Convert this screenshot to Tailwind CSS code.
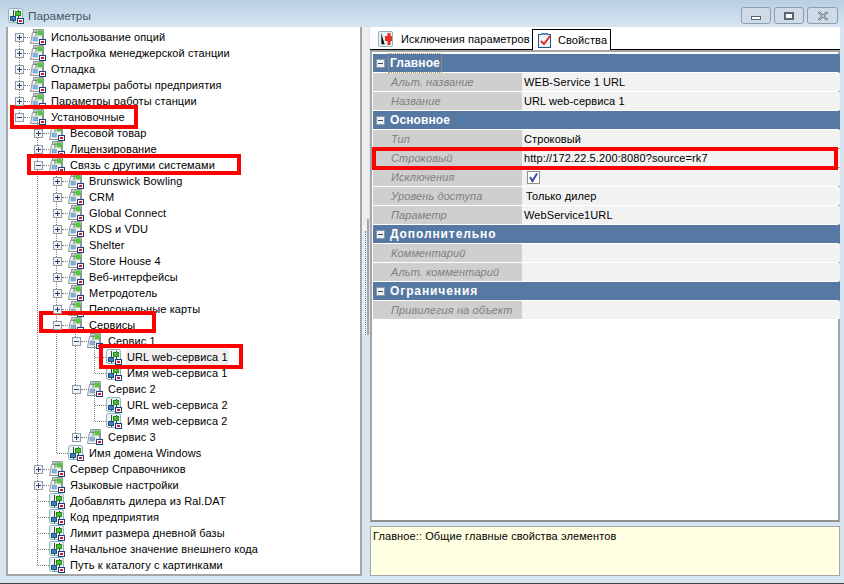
<!DOCTYPE html>
<html lang="ru">
<head>
    <meta charset="UTF-8">
    <title>Параметры</title>
    <script src="https://cdn.jsdelivr.net/npm/@tailwindcss/browser@4"></script>
</head>
<body class="w-[844px] h-[584px] overflow-hidden bg-[#d7e5f2] font-['Liberation_Sans',sans-serif] text-[11px] tracking-[0.1px] text-black">
    <svg class="hidden">
        <symbol id="leaf" viewBox="0 0 16 16">
            <rect x="0.500" y="0.500" width="14" height="14" rx="2" fill="#e6f2f3" stroke="#8fb3bb"/>
            <path d="M5.500 2v7M10.500 8v3M5.500 13v1M10.500 2v1" stroke="#444"/>
            <rect x="2.500" y="8.500" width="5" height="4" fill="#3c7fc4" stroke="#24507f"/>
            <rect x="7.500" y="3.500" width="5" height="4" fill="#46c22c" stroke="#2a8a1a"/>
            <rect x="9.500" y="10.500" width="6" height="5" fill="#fff" stroke="#1d3f78"/>
            <rect x="11" y="12" width="3" height="2" fill="#e8102a"/>
        </symbol>
        <symbol id="folder" viewBox="0 0 16 16">
            <path d="M3.500 0.500h10v12h-10z" fill="#c7cdcd" stroke="#8f9898"/>
            <path d="M2.500 3.500h10v11H0.500z" fill="#eef2f2" stroke="#8f9898"/>
            <rect x="7.500" y="1.500" width="5" height="5" fill="#56c63c"/>
            <rect x="3" y="8" width="4.500" height="4" fill="#85b3dc" stroke="#6f96b8" stroke-width="0.500"/>
            <path d="M6 2v5" stroke="#6f7878"/>
            <rect x="9.500" y="10.500" width="6" height="5" fill="#fff" stroke="#1d3f78"/>
            <rect x="11" y="12" width="3" height="2" fill="#e8102a"/>
        </symbol>
    </svg>

    <!-- title bar -->
    <div class="h-[27px] flex items-center bg-gradient-to-b from-[#b9cfe2] to-[#d5e4f1]">
        <svg class="w-4 h-4 ml-[8px] mt-[5px]"><use href="#leaf"/></svg>
        <span class="ml-[4px] mt-[7px] text-[11.800px] tracking-normal text-[#46545f]">Параметры</span>
        <div class="ml-auto mr-[6px] mt-[4px] flex gap-[3px]">
            <div class="w-[30px] h-[17px] rounded-[3px] border border-[#8c9db0] bg-[#cfdce8] flex items-center justify-center">
                <div class="w-[10px] h-[4px] mt-[5px] border border-[#5b6570] bg-white"></div>
            </div>
            <div class="w-[30px] h-[17px] rounded-[3px] border border-[#8c9db0] bg-[#cfdce8] flex items-center justify-center">
                <div class="w-[10px] h-[8px] border-2 border-[#5b6570] bg-white"></div>
            </div>
            <div class="w-[31px] h-[17px] rounded-[3px] border border-[#8c9db0] bg-[#cfdce8] flex items-center justify-center">
                <svg class="w-[12px] h-[10px]" viewBox="0 0 12 10"><path d="M1.500 1l9 8M10.500 1l-9 8" stroke="#59636e" stroke-width="2.200"/><path d="M1.500 1l9 8M10.500 1l-9 8" stroke="#f4f6f8" stroke-width="0.800"/></svg>
            </div>
        </div>
    </div>

    <div class="flex h-[549px] pl-[6px] pr-[4px]">
        <!-- tree -->
        <div id="tree" class="relative w-[357px] border-2 border-t-0 border-[#a6a6a6] bg-white pt-[2px]"></div>

        <!-- splitter -->
        <div class="w-[7px] flex flex-col">
            <div class="h-[192px] bg-[#eeeeee]"></div>
            <div class="relative h-[116px] border-r-2 border-[#a6a6a6] bg-[#eeeeee]">
                <span class="absolute left-0 top-[1px] text-[11px] leading-[14px] font-bold text-white">‹</span>
                <div class="absolute left-[3px] top-[12px] bottom-0 border-l border-dotted border-[#3f8ee8]"></div>
            </div>
        </div>

        <!-- right side -->
        <div class="w-[470px] ml-[1px] flex flex-col">
            <div class="h-[23px] flex items-end bg-white border-b border-black">
                <div class="h-[20px] flex items-center pl-[8px] w-[162px]">
                    <svg class="w-[16px] h-[16px] shrink-0" viewBox="0 0 16 16">
                        <rect x="0.500" y="0.500" width="14" height="15" rx="1" fill="#e6f2f3" stroke="#8fb3bb"/>
                        <path d="M3.500 3v10h3M11 2v12" stroke="#555"/>
                        <rect x="7" y="5" width="7" height="5" fill="#e5301f"/>
                        <rect x="9.500" y="2" width="3" height="12" fill="#e5301f"/>
                    </svg>
                    <span class="ml-[7px] whitespace-nowrap">Исключения параметров</span>
                </div>
                <div class="relative h-[21px] w-[79px] -mb-px flex items-center pl-[5px] bg-white border border-b-0 border-black">
                    <svg class="w-[14px] h-[15px] shrink-0" viewBox="0 0 14 15">
                        <rect x="0.500" y="1.500" width="12" height="13" fill="#eef3fa" stroke="#24507f"/>
                        <path d="M3 1h7" stroke="#5f88b5" stroke-width="2"/>
                        <path d="M3 8l3 3 6-8" fill="none" stroke="#e0301f" stroke-width="2"/>
                    </svg>
                    <span class="ml-[6px]">Свойства</span>
                </div>
            </div>

            <div class="h-[472px] border-2 border-[#a6a6a6] border-b-[#8f8f8f] bg-white pt-[2px] pl-[1px]">
                <div class="flex flex-col gap-px w-[467px]">
                    <div class="h-[18px] flex items-center bg-[#5679a3] text-white font-bold text-[12px] pl-[3px]">
                        <span class="w-[9px] h-[9px] flex items-center justify-center border border-[#8b99a8] bg-[#eef0f2]"><span class="w-[5px] h-px bg-[#3a4a5c]"></span></span>
                        <span class="ml-[4px] px-[1px] outline-1 outline-dotted outline-[#b79a5e]">Главное</span>
                    </div>
                    <div class="h-[18px] flex items-center"><div class="w-[149px] h-full flex items-center pl-[18px] bg-[#cfcfcf] italic text-[#808080]">Альт. название</div><div class="flex-1 h-full flex items-center pl-[2px] bg-[#f2f2f2]">WEB-Service 1 URL</div></div>
                    <div class="h-[18px] flex items-center"><div class="w-[149px] h-full flex items-center pl-[18px] bg-[#cfcfcf] italic text-[#808080]">Название</div><div class="flex-1 h-full flex items-center pl-[2px] bg-[#f2f2f2]">URL web-сервиса 1</div></div>

                    <div class="h-[18px] flex items-center bg-[#5679a3] text-white font-bold text-[12px] pl-[3px]">
                        <span class="w-[9px] h-[9px] flex items-center justify-center border border-[#8b99a8] bg-[#eef0f2]"><span class="w-[5px] h-px bg-[#3a4a5c]"></span></span>
                        <span class="ml-[5px]">Основное</span>
                    </div>
                    <div class="h-[18px] flex items-center"><div class="w-[149px] h-full flex items-center pl-[18px] bg-[#cfcfcf] italic text-[#808080]">Тип</div><div class="flex-1 h-full flex items-center pl-[2px] bg-[#f2f2f2]">Строковый</div></div>
                    <div class="h-[18px] flex items-center"><div class="w-[149px] h-full flex items-center pl-[18px] bg-[#cfcfcf] italic text-[#808080]">Строковый</div><div class="flex-1 h-full flex items-center pl-[2px] bg-[#f2f2f2]">http://172.22.5.200:8080?source=rk7</div></div>
                    <div class="h-[18px] flex items-center"><div class="w-[149px] h-full flex items-center pl-[18px] bg-[#cfcfcf] italic text-[#808080]">Исключения</div><div class="flex-1 h-full flex items-center pl-[5px] bg-[#f2f2f2]">
                        <svg class="w-[13px] h-[13px]" viewBox="0 0 13 13"><rect x="0.500" y="0.500" width="12" height="12" fill="#fff" stroke="#8f8f8f"/><path d="M3 6l2.500 4L10 2.500" fill="none" stroke="#3a4fa8" stroke-width="2"/></svg>
                    </div></div>
                    <div class="h-[18px] flex items-center"><div class="w-[149px] h-full flex items-center pl-[18px] bg-[#cfcfcf] italic text-[#808080]">Уровень доступа</div><div class="flex-1 h-full flex items-center pl-[4px] bg-[#f2f2f2]">Только дилер</div></div>
                    <div class="h-[18px] flex items-center"><div class="w-[149px] h-full flex items-center pl-[18px] bg-[#cfcfcf] italic text-[#808080]">Параметр</div><div class="flex-1 h-full flex items-center pl-[2px] bg-[#f2f2f2]">WebService1URL</div></div>

                    <div class="h-[18px] flex items-center bg-[#5679a3] text-white font-bold text-[12px] pl-[3px]">
                        <span class="w-[9px] h-[9px] flex items-center justify-center border border-[#8b99a8] bg-[#eef0f2]"><span class="w-[5px] h-px bg-[#3a4a5c]"></span></span>
                        <span class="ml-[5px] tracking-[0.9px]">Дополнительно</span>
                    </div>
                    <div class="h-[18px] flex items-center"><div class="w-[149px] h-full flex items-center pl-[18px] bg-[#cfcfcf] italic text-[#808080]">Комментарий</div><div class="flex-1 h-full bg-[#f2f2f2]"></div></div>
                    <div class="h-[18px] flex items-center"><div class="w-[149px] h-full flex items-center pl-[18px] bg-[#cfcfcf] italic text-[#808080]">Альт. комментарий</div><div class="flex-1 h-full bg-[#f2f2f2]"></div></div>

                    <div class="h-[18px] flex items-center bg-[#5679a3] text-white font-bold text-[12px] pl-[3px]">
                        <span class="w-[9px] h-[9px] flex items-center justify-center border border-[#8b99a8] bg-[#eef0f2]"><span class="w-[5px] h-px bg-[#3a4a5c]"></span></span>
                        <span class="ml-[5px] tracking-[0.9px]">Ограничения</span>
                    </div>
                    <div class="h-[18px] flex items-center"><div class="w-[149px] h-full flex items-center pl-[18px] bg-[#cfcfcf] italic text-[#808080]">Привилегия на объект</div><div class="flex-1 h-full bg-[#f2f2f2]"></div></div>
                </div>
            </div>

            <div class="mt-[4px] h-[50px] border border-[#a6a6a6] bg-[#ffffe1] pl-[2px] pt-[2px] leading-[14px]">Главное:: Общие главные свойства элементов</div>
        </div>
    </div>
    <div class="h-[8px] border-b border-[#444]"></div>

    <!-- red marks drawn over the screenshot -->
    <div class="absolute left-[10px] top-[105px] w-[128px] h-[24px] border-[4px] border-[#ff0000]"></div>
    <div class="absolute left-[27px] top-[154px] w-[214px] h-[21px] border-[4px] border-[#ff0000]"></div>
    <div class="absolute left-[39px] top-[311px] w-[117px] h-[22px] border-[4px] border-[#ff0000]"></div>
    <div class="absolute left-[99px] top-[344px] w-[144px] h-[25px] border-[4px] border-[#ff0000]"></div>
    <div class="absolute left-[372px] top-[147px] w-[466px] h-[23px] border-[4px] border-[#ff0000]"></div>

    <script>
        // level, kind (p = collapsed, m = expanded, l = leaf), label
        const rows = [
            [0, 'p', 'Использование опций'],
            [0, 'p', 'Настройка менеджерской станции'],
            [0, 'p', 'Отладка'],
            [0, 'p', 'Параметры работы предприятия'],
            [0, 'p', 'Параметры работы станции'],
            [0, 'm', 'Установочные'],
            [1, 'p', 'Весовой товар'],
            [1, 'p', 'Лицензирование'],
            [1, 'm', 'Связь с другими системами'],
            [2, 'p', 'Brunswick Bowling'],
            [2, 'p', 'CRM'],
            [2, 'p', 'Global Connect'],
            [2, 'p', 'KDS и VDU'],
            [2, 'p', 'Shelter'],
            [2, 'p', 'Store House 4'],
            [2, 'p', 'Веб-интерфейсы'],
            [2, 'p', 'Метродотель'],
            [2, 'p', 'Персональные карты'],
            [2, 'm', 'Сервисы'],
            [3, 'm', 'Сервис 1'],
            [4, 'l', 'URL web-сервиса 1', true],
            [4, 'l', 'Имя web-сервиса 1'],
            [3, 'm', 'Сервис 2'],
            [4, 'l', 'URL web-сервиса 2'],
            [4, 'l', 'Имя web-сервиса 2'],
            [3, 'p', 'Сервис 3'],
            [2, 'l', 'Имя домена Windows'],
            [1, 'p', 'Сервер Справочников'],
            [1, 'p', 'Языковые настройки'],
            [1, 'l', 'Добавлять дилера из Ral.DAT'],
            [1, 'l', 'Код предприятия'],
            [1, 'l', 'Лимит размера дневной базы'],
            [1, 'l', 'Начальное значение внешнего кода'],
            [1, 'l', 'Путь к каталогу с картинками'],
        ];
        // vertical guides: x, first row, last row
        const guides = [[0, 0, 5], [1, 5, 33], [2, 8, 26], [3, 18, 25], [4, 19, 21], [4, 22, 24]];

        let html = '';
        for (const [x, a, b] of guides) {
            html += `<div class="absolute border-l border-dotted border-[#808080]" style="left:${5 + 19 * x - (x > 0 ? 1 : 0) + 6}px;top:${10 + 16 * a}px;height:${16 * (b - a)}px"></div>`;
        }
        for (const [level, kind, label, selected] of rows) {
            const sign = kind === 'l' ? ''
                : `<span class="relative z-10 w-[9px] h-[9px] shrink-0 flex items-center justify-center border border-[#8f9aa5] bg-[#f3f4f5]"><span class="absolute w-[5px] h-px bg-[#2b3f7a]"></span>${kind === 'p' ? '<span class="absolute w-px h-[5px] bg-[#2b3f7a]"></span>' : ''}</span>`;
            html += `<div class="h-4 flex items-center whitespace-nowrap" style="padding-left:${7 + 19 * level}px">
                <div class="w-[15px] h-4 flex items-center ${kind === 'l' ? 'pl-[4px]' : ''}">${sign}<span class="flex-1 border-t border-dotted border-[#808080]"></span></div>
                <svg class="w-4 h-4 shrink-0"><use href="#${kind === 'l' ? 'leaf' : 'folder'}"/></svg>
                <span class="ml-[4px] px-[1px] leading-4 ${selected ? 'bg-[#f0f0f0]' : ''}">${label}</span>
            </div>`;
        }
        document.getElementById('tree').innerHTML = html;
    </script>
</body>
</html>
